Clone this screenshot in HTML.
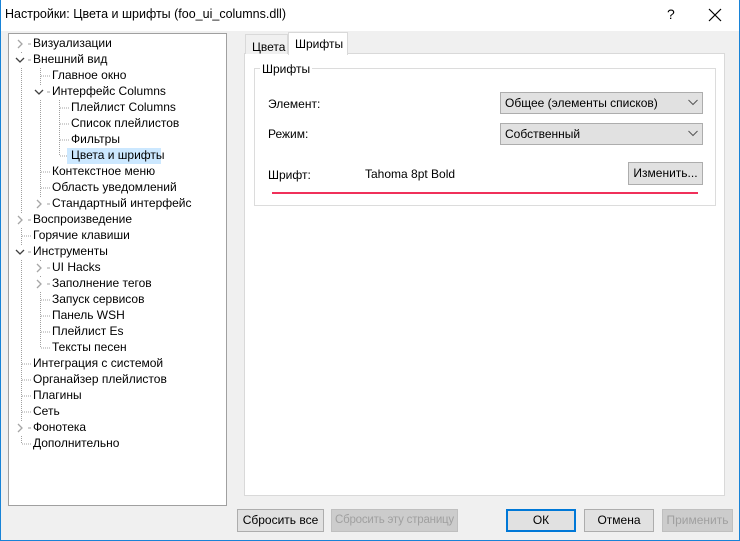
<!DOCTYPE html>
<html><head><meta charset="utf-8"><style>
*{box-sizing:border-box;margin:0;padding:0}
body{width:740px;height:541px;background:#f0f0f0;font-family:"Liberation Sans",sans-serif;font-size:12px;color:#000;position:relative;overflow:hidden}
.a{position:absolute;white-space:nowrap}
.title{left:0;top:0;width:740px;height:31px;background:#fff}
.tree{left:8px;top:33px;width:219px;height:473px;background:#fff;border:1px solid #a0a0a0}
.t{position:absolute;line-height:16px;height:16px;padding:0 2px;white-space:nowrap}
.btn{position:absolute;height:23px;background:#e1e1e1;border:1px solid #adadad;text-align:center;line-height:21px;white-space:nowrap;overflow:hidden}
.dis{color:#a0a0a0;background:#cccccc;border-color:#bfbfbf}
.combo{position:absolute;background:#e1e1e1;border:1px solid #adadad;height:22px;line-height:20px;padding-left:4px;white-space:nowrap}
</style></head><body>
<div class="a title"></div>
<div class="a" style="left:5px;top:7px;font-size:12.5px">Настройки: Цвета и шрифты (foo_ui_columns.dll)</div>
<div class="a" style="left:667px;top:6px;font-size:14px">?</div>
<svg class="a" style="left:708px;top:8px" width="14" height="14"><path d="M1 1L13 13M13 1L1 13" stroke="#000" stroke-width="1.2"/></svg>

<div class="a tree">
<svg style="position:absolute;left:0;top:0" width="219" height="473">
<g stroke="#a0a0a0" stroke-dasharray="1 1" shape-rendering="crispEdges">
<path d="M12.5 10V410"/>
<path d="M31.5 34V170"/>
<path d="M50.5 66V122"/>
<path d="M31.5 226V314"/>
<path d="M13 10H22M13 26H22M13 186H22M13 202H22M13 218H22M13 330H22M13 346H22M13 362H22M13 378H22M13 394H22M13 410H22"/>
<path d="M32 42H41M32 58H41M32 138H41M32 154H41M32 170H41M32 234H41M32 250H41M32 266H41M32 282H41M32 298H41M32 314H41"/>
<path d="M51 74H60M51 90H60M51 106H60M51 122H60"/>
</g>
<g fill="#fff">
<rect x="5" y="3" width="14" height="14"/><rect x="5" y="19" width="14" height="14"/>
<rect x="24" y="51" width="14" height="14"/><rect x="24" y="163" width="14" height="14"/>
<rect x="5" y="179" width="14" height="14"/><rect x="5" y="211" width="14" height="14"/>
<rect x="24" y="227" width="14" height="14"/><rect x="24" y="243" width="14" height="14"/>
<rect x="5" y="387" width="14" height="14"/>
</g>
<g fill="none" stroke-width="1.3">
<path d="M9 6L13 10L9 14" stroke="#a6a6a6"/>
<path d="M7 24L11 28L15 24" stroke="#404040"/>
<path d="M26 56L30 60L34 56" stroke="#404040"/>
<path d="M28 166L32 170L28 174" stroke="#a6a6a6"/>
<path d="M9 182L13 186L9 190" stroke="#a6a6a6"/>
<path d="M7 216L11 220L15 216" stroke="#404040"/>
<path d="M28 230L32 234L28 238" stroke="#a6a6a6"/>
<path d="M28 246L32 250L28 254" stroke="#a6a6a6"/>
<path d="M9 390L13 394L9 398" stroke="#a6a6a6"/>
</g>
<g stroke="#a0a0a0" stroke-dasharray="1 1" shape-rendering="crispEdges">
<path d="M20 10H22M20 26H22M20 186H22M20 218H22M20 394H22M39 58H41M39 170H41M39 234H41M39 250H41"/>
</g>
<rect x="58" y="114" width="94" height="16" fill="#cce8ff"/>
</svg>
<div class="t" style="left:22px;top:1px">Визуализации</div>
<div class="t" style="left:22px;top:17px">Внешний вид</div>
<div class="t" style="left:41px;top:33px">Главное окно</div>
<div class="t" style="left:41px;top:49px">Интерфейс Columns</div>
<div class="t" style="left:60px;top:65px">Плейлист Columns</div>
<div class="t" style="left:60px;top:81px">Список плейлистов</div>
<div class="t" style="left:60px;top:97px">Фильтры</div>
<div class="t" style="left:60px;top:113px">Цвета и шрифты</div>
<div class="t" style="left:41px;top:129px">Контекстное меню</div>
<div class="t" style="left:41px;top:145px">Область уведомлений</div>
<div class="t" style="left:41px;top:161px">Стандартный интерфейс</div>
<div class="t" style="left:22px;top:177px">Воспроизведение</div>
<div class="t" style="left:22px;top:193px">Горячие клавиши</div>
<div class="t" style="left:22px;top:209px">Инструменты</div>
<div class="t" style="left:41px;top:225px">UI Hacks</div>
<div class="t" style="left:41px;top:241px">Заполнение тегов</div>
<div class="t" style="left:41px;top:257px">Запуск сервисов</div>
<div class="t" style="left:41px;top:273px">Панель WSH</div>
<div class="t" style="left:41px;top:289px">Плейлист Es</div>
<div class="t" style="left:41px;top:305px">Тексты песен</div>
<div class="t" style="left:22px;top:321px">Интеграция с системой</div>
<div class="t" style="left:22px;top:337px">Органайзер плейлистов</div>
<div class="t" style="left:22px;top:353px">Плагины</div>
<div class="t" style="left:22px;top:369px">Сеть</div>
<div class="t" style="left:22px;top:385px">Фонотека</div>
<div class="t" style="left:22px;top:401px">Дополнительно</div>
</div>

<div class="a" style="left:244px;top:53px;width:481px;height:443px;background:#fff;border:1px solid #d9d9d9"></div>
<div class="a" style="left:245px;top:34px;width:43px;height:20px;background:#f0f0f0;border:1px solid #d9d9d9;border-bottom:none;padding:5px 0 0 6px">Цвета</div>
<div class="a" style="left:288px;top:32px;width:60px;height:23px;background:#fff;border:1px solid #d9d9d9;border-bottom:none;padding:4px 0 0 6px">Шрифты</div>

<div class="a" style="left:254px;top:68px;width:462px;height:138px;border:1px solid #dcdcdc"></div>
<div class="a" style="left:260px;top:62px;background:#fff;padding:0 2px">Шрифты</div>
<div class="a" style="left:268px;top:97px">Элемент:</div>
<div class="a" style="left:268px;top:127px">Режим:</div>
<div class="a" style="left:268px;top:168px">Шрифт:</div>
<div class="a" style="left:365px;top:167px">Tahoma 8pt Bold</div>
<div class="combo" style="left:500px;top:92px;width:203px">Общее (элементы списков)</div>
<div class="combo" style="left:500px;top:123px;width:203px">Собственный</div>
<svg class="a" style="left:688px;top:99px" width="10" height="8"><path d="M0.5 1L5 5.5L9.5 1" fill="none" stroke="#555"/></svg>
<svg class="a" style="left:688px;top:130px" width="10" height="8"><path d="M0.5 1L5 5.5L9.5 1" fill="none" stroke="#555"/></svg>
<div class="btn" style="left:628px;top:162px;width:75px">Изменить...</div>
<div class="a" style="left:272px;top:192px;width:426px;height:2px;background:#f0305a"></div>

<div class="btn" style="left:237px;top:509px;width:87px">Сбросить все</div>
<div class="btn dis" style="left:331px;top:509px;width:127px;font-size:11.5px;letter-spacing:-0.2px">Сбросить эту страницу</div>
<div class="btn" style="left:506px;top:509px;width:70px;border:2px solid #0078d7;line-height:19px">ОК</div>
<div class="btn" style="left:584px;top:509px;width:70px">Отмена</div>
<div class="btn dis" style="left:662px;top:509px;width:71px">Применить</div>
<div class="a" style="left:0;top:540px;width:740px;height:1px;background:#1883d7"></div>
<div class="a" style="left:0;top:0;width:1px;height:541px;background:#1883d7"></div>
<div class="a" style="left:739px;top:0;width:1px;height:541px;background:#1883d7"></div>
</body></html>
